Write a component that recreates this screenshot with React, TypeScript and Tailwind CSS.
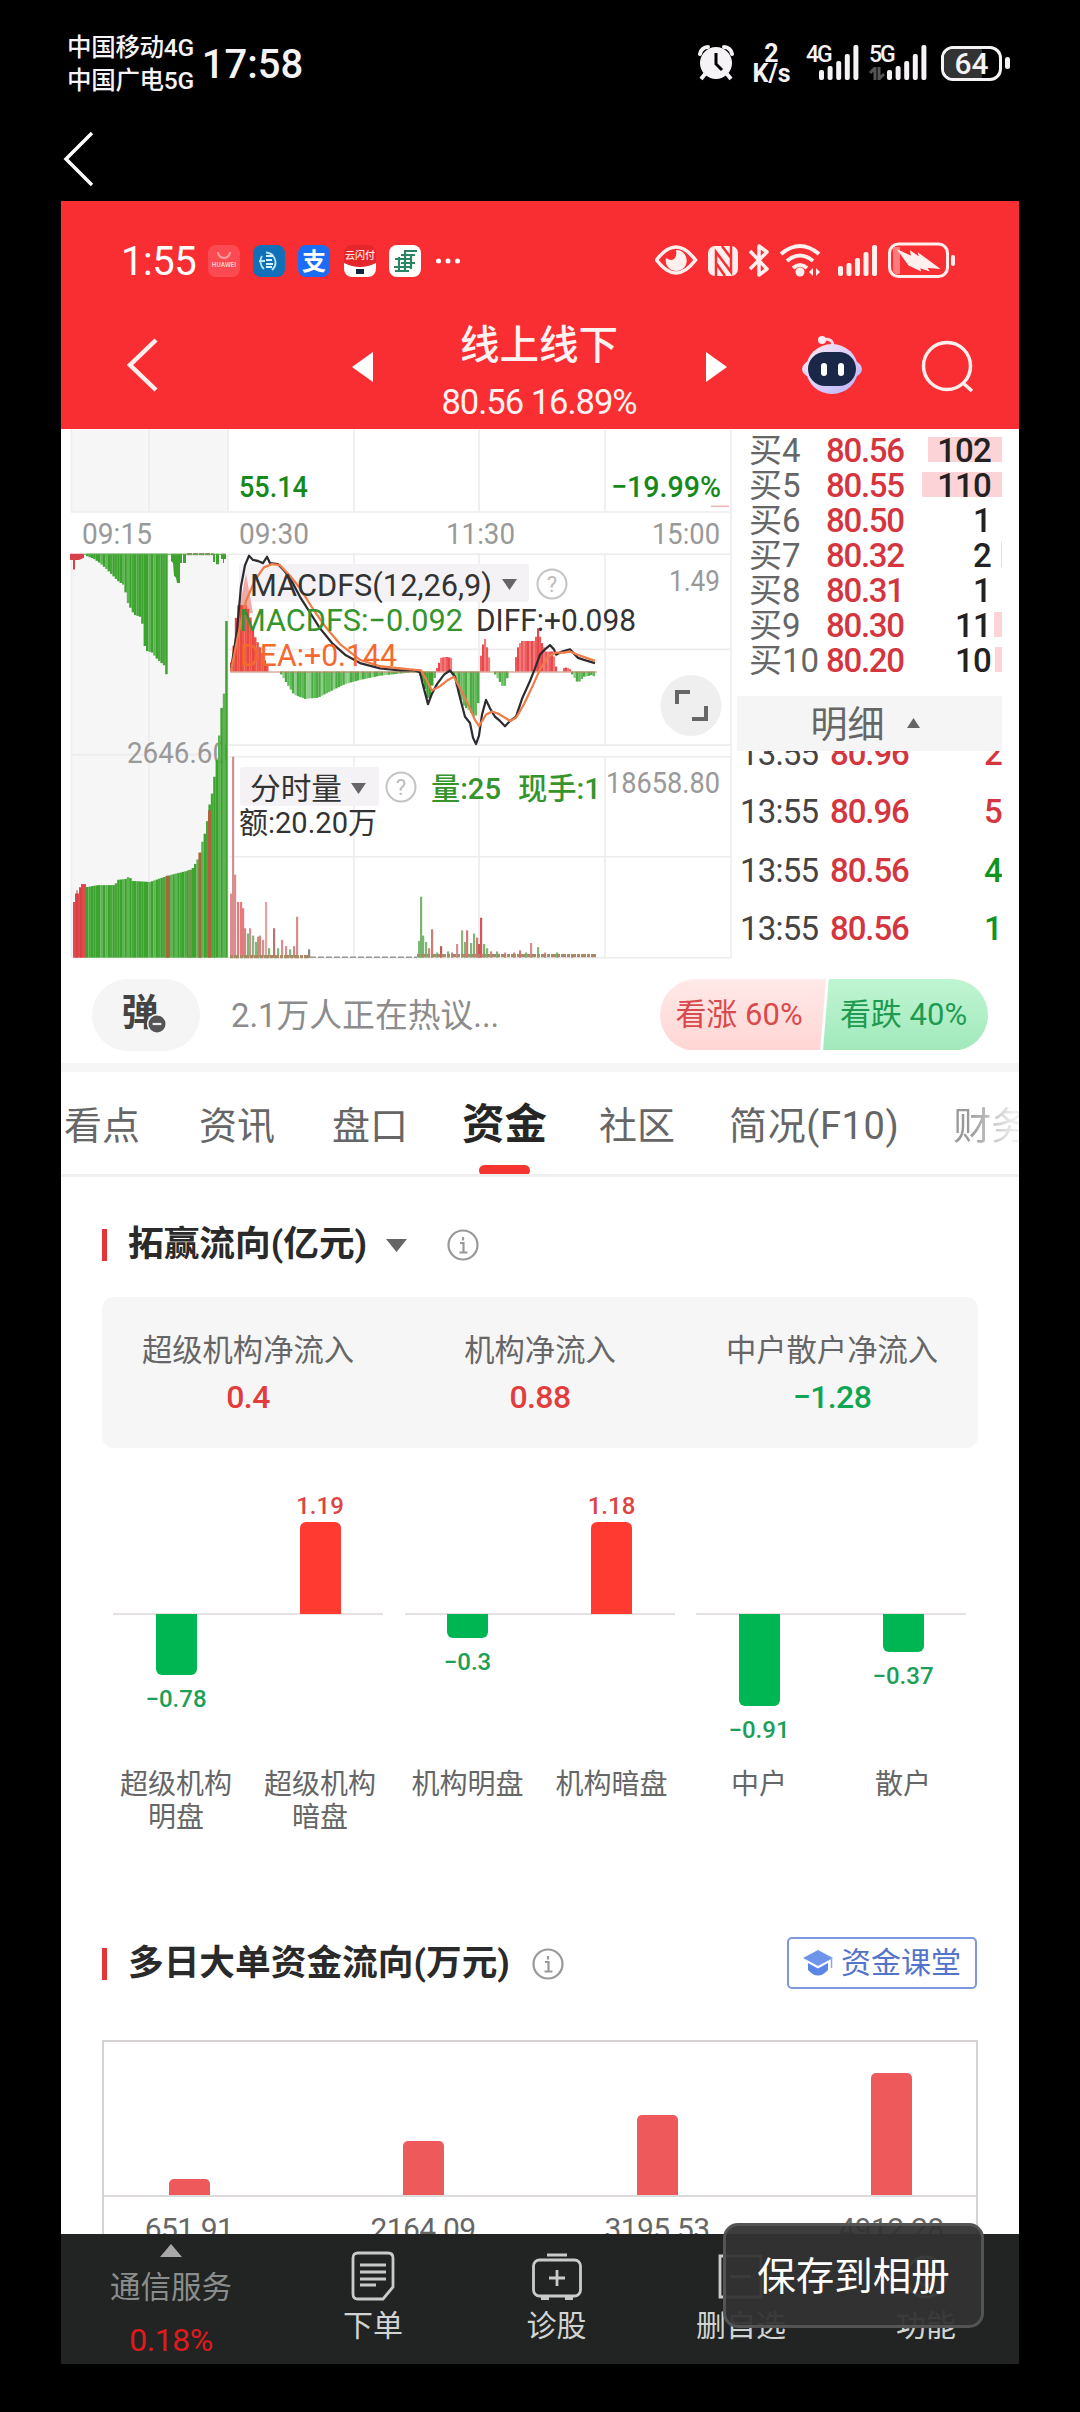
import type { ReactNode } from 'react'

type Point = [number, number]

const RED = '#d8404a'
const GREEN = '#3da32f'

const bids = [
  { level: 4, price: '80.56', volume: 102, bar: 74 },
  { level: 5, price: '80.55', volume: 110, bar: 80 },
  { level: 6, price: '80.50', volume: 1, bar: 0 },
  { level: 7, price: '80.32', volume: 2, bar: 1 },
  { level: 8, price: '80.31', volume: 1, bar: 0 },
  { level: 9, price: '80.30', volume: 11, bar: 8 },
  { level: 10, price: '80.20', volume: 10, bar: 7 },
]

const trades = [
  { time: '13:55', price: '80.96', count: 2, up: true },
  { time: '13:55', price: '80.96', count: 5, up: true },
  { time: '13:55', price: '80.56', count: 4, up: false },
  { time: '13:55', price: '80.56', count: 1, up: false },
]

const summary = [
  { label: '超级机构净流入', value: '0.4', up: true },
  { label: '机构净流入', value: '0.88', up: true },
  { label: '中户散户净流入', value: '−1.28', up: false },
]

const flows = [
  [
    { name: '超级机构明盘', value: '−0.78', size: 61, up: false },
    { name: '超级机构暗盘', value: '1.19', size: 92, up: true },
  ],
  [
    { name: '机构明盘', value: '−0.3', size: 24, up: false },
    { name: '机构暗盘', value: '1.18', size: 92, up: true },
  ],
  [
    { name: '中户', value: '−0.91', size: 92, up: false },
    { name: '散户', value: '−0.37', size: 38, up: false },
  ],
]

const days = [
  { value: '651.91', size: 16 },
  { value: '2164.09', size: 54 },
  { value: '3195.53', size: 80 },
  { value: '4912.28', size: 122 },
]

// height of a polyline at x
function at(points: Point[], x: number) {
  for (let i = 1; i < points.length; i++) {
    const [x0, y0] = points[i - 1]
    const [x1, y1] = points[i]
    if (x <= x1) return y0 + ((y1 - y0) * (x - x0)) / (x1 - x0 || 1)
  }
  return points[points.length - 1][1]
}

function Bars({ points, base, colors, step = 2.4 }: { points: Point[], base: number, colors: string[], step?: number }) {
  const start = points[0][0]
  const end = points[points.length - 1][0]
  const count = Math.floor((end - start) / step)
  return (
    <>
      {Array.from({ length: count }, (_, i) => {
        const x = start + i * step
        const y = at(points, x + step / 2)
        return (
          <rect key={i} x={x} y={Math.min(y, base)} width={step + 0.1} height={Math.abs(y - base)} fill={colors[(i * 7 + (i >> 2)) % colors.length]} />
        )
      })}
    </>
  )
}

const greens = [GREEN, GREEN, '#47a93a', '#5db552', GREEN]
const softGreens = ['#4cab42', '#62bb5a', '#4cab42', '#8ccf86']
const reds = ['#ee5a5c', '#e9484b', '#f07a7c']

const auctionTop: Point[] = [[86, 549], [94, 552], [100, 556], [108, 563], [118, 573], [124, 577], [128, 594], [134, 605], [140, 607], [144, 618], [145, 639], [152, 641], [157, 647], [165, 654], [166, 661], [168, 664]]
const auctionVolume: Point[] = [[86, 864], [98, 862], [115, 862], [118, 857], [127, 856], [129, 853], [132, 858], [150, 859], [156, 857], [165, 854], [172, 852], [185, 849], [192, 847], [197, 839], [200, 832], [203, 818], [206, 810], [209, 788], [212, 775], [215, 755], [218, 735], [221, 697], [224, 680], [225, 612], [228, 610]]

const diff = '231,657 237,620 241,578 245,558 249,549 253,553 258,554 263,556 267,550 270,556 278,557 284,563 290,570 300,588 310,603 320,618 332,632 345,643 360,651 380,656 400,658 415,658 420,660 423,672 428,690 432,680 437,671 444,662 450,658 455,664 460,684 465,702 470,708 473,722 476,728 479,720 482,700 486,686 490,694 495,702 500,706 505,711 510,706 516,702 522,685 530,668 535,656 540,643 545,638 550,634 554,638 556,643 562,640 570,638 578,646 584,648 595,651'
const dea = '231,658 238,625 246,592 255,572 264,560 272,557 280,558 290,568 300,580 312,598 325,616 340,633 360,648 380,654 410,657 421,658 427,668 432,677 440,673 448,667 454,664 460,675 468,690 475,705 479,711 486,700 492,697 498,699 505,703 510,706 516,703 524,690 532,674 540,657 548,645 556,641 564,641 570,640 580,644 595,649'

const spikes: [number, number, string][] = [
  [233, 740, '#d58f93'], [235, 852, '#e08a8c'], [231, 870, '#e08a8c'], [238, 878, '#e57a7c'], [241, 878, '#e57a7c'], [243, 884, '#e57a7c'],
  [245, 903, '#c98a80'], [248, 908, '#7fb576'], [250, 903, '#d58f93'], [253, 910, '#8bb57a'], [256, 916, '#7fb576'], [258, 911, '#c98a80'],
  [260, 910, '#c98a80'], [263, 914, '#d58f93'], [266, 878, '#e3a3a5'], [269, 922, '#7fb576'], [274, 903, '#b5776d'], [278, 922, '#7fb576'],
  [282, 914, '#d58f93'], [286, 920, '#d58f93'], [290, 923, '#7fb576'], [294, 920, '#c98a80'], [297, 892, '#d58f93'], [309, 923, '#888'],
  [419, 915, '#7fb576'], [421, 873, '#77b56d'], [423, 910, '#77b56d'], [426, 916, '#7fb576'], [429, 922, '#c98a80'], [432, 904, '#d07a78'],
  [437, 926, '#7fb576'], [441, 920, '#c05a58'], [448, 925, '#7fb576'], [452, 926, '#c98a80'], [457, 918, '#d58f93'], [462, 905, '#8bb57a'], [465, 916, '#7fb576'],
  [467, 905, '#d07a78'], [471, 917, '#7fb576'], [474, 908, '#7fb576'], [477, 912, '#d07a78'], [479, 918, '#c05a58'], [481, 893, '#d9545a'],
  [484, 918, '#77b56d'], [487, 922, '#7fb576'], [491, 925, '#c98a80'], [497, 925, '#7fb576'], [505, 926, '#d58f93'], [514, 926, '#c98a80'],
  [520, 924, '#d07a78'], [526, 926, '#7fb576'], [531, 917, '#d58f93'], [538, 921, '#7fb576'], [545, 926, '#d58f93'], [557, 926, '#7fb576'], [572, 928, '#c98a80'],
]

function Label({ x, y, w, size = 30, color = '#999', weight = 400, children }: { x: number, y: number, w: number, size?: number, color?: string, weight?: number, children: string }) {
  return (
    <text x={x} y={y} textLength={w} lengthAdjust="spacingAndGlyphs" fontSize={size} fill={color} fontWeight={weight}>{children}</text>
  )
}

function Help({ cx, cy }: { cx: number, cy: number }) {
  return (
    <g>
      <circle cx={cx} cy={cy} r="14.5" fill="none" stroke="#c4c4c4" strokeWidth="2" />
      <text x={cx} y={cy + 8} textAnchor="middle" fontSize="22" fill="#bbb">?</text>
    </g>
  )
}

function MinuteChart() {
  return (
    <svg width="674" height="534" viewBox="61 429 674 534" className="shrink-0">
      {/* plot, in data coordinates */}
      <g transform="translate(0 -21.97) scale(1 1.0523)">
        <path d="M71 429h157v78H71zM71 547h157v384H71z" fill="#f7f6f7" />
        <path d="M71 507.500H731M228 547.500H731M228 638H731M228 729H731M228 740H731M228 835H731M228 931H731M71 738H228" stroke="#eeebee" strokeWidth="1.500" />
        <path d="M71.500 429V507M71.500 547V931M149 429V507M149 547V931M228 429V507M228 547V931M354 429V507M354 547V729M354 740V931M479 429V507M479 547V729M479 740V931M605 429V507M605 547V729M605 740V931M731 429V931" stroke="#eeeaee" strokeWidth="1.500" />
        <path d="M711 502H729" stroke="#f0b6ba" strokeWidth="1.500" />
      </g>
      <Label x={127} y={763} w={101}>2646.60</Label>
      <rect x="239" y="564" width="290" height="38" rx="3" fill="#f4f2f5" />
      <rect x="240" y="767" width="139" height="39" rx="3" fill="#f4f2f5" />
      <g transform="translate(0 -21.97) scale(1 1.0523)">
        <path d="M70 547h14v4l-5 2-4 0v9h-2v-9h-3z" fill={RED} />
        <Bars points={auctionTop} base={547} colors={greens} />
        <path d="M171 547h11v9h-2v19h-3l-1-5-2-2-1-12-2-2zM183 547h3v9h-3zM213 547h2v8h-2zM216 547h3v10h-3zM221 547h5v5h-2v4h-1v-4h-2z" fill={GREEN} />
        <path d="M187 547.500H213" stroke="#9c8a6a" strokeWidth="2" strokeDasharray="5 1" />
        <path d="M84 547.500H226" stroke="#5da850" strokeWidth="1" />
        <path d="M73 931v-53h2v-8h4v-6h2v-3h5v70z" fill="#e3484d" />
        <path d="M77 931v-64M81 931v-66" stroke="#c33a3e" />
        <Bars points={auctionVolume} base={931} colors={greens} />
        <path d="M167.500 931v-78M200 931v-100" stroke="#a8663b" strokeWidth="3" />
        <path d="M190 931v-83" stroke="#6a9a4a" strokeWidth="4" />
        <path d="M209.500 931v-140" stroke="#b0623b" strokeWidth="3" />

        <path d="M239 600L246 566L253 604z" fill="#f3a9a7" />
        <Bars points={[[230, 658], [234, 632], [237, 596], [247, 596], [250, 606], [255, 626], [262, 640], [266, 652], [269, 656]]} base={659} colors={['#ee5146', '#ee5146', '#ea463f']} />
        <Bars points={[[280, 660], [286, 669], [294, 681], [305, 685], [318, 684], [330, 678], [345, 671], [360, 667], [380, 663], [410, 660], [419, 660]]} base={659} colors={softGreens} />
        <Bars points={[[419, 660], [424, 672], [429, 690], [431, 676], [436, 661]]} base={659} colors={greens} />
        <Bars points={[[453, 661], [457, 675], [464, 692], [470, 697], [475, 704], [478, 692], [480, 663]]} base={659} colors={softGreens} />
        <Bars points={[[494, 660], [500, 669], [504, 675], [509, 660]]} base={659} colors={softGreens} />
        <Bars points={[[571, 660], [578, 670], [584, 664], [590, 663], [592, 662], [597, 666]]} base={659} colors={softGreens} />
        <Bars points={[[436, 658], [441, 646], [446, 645], [451, 646], [453, 658]]} base={659} colors={reds} step={2} />
        <Bars points={[[480, 652], [482, 636], [485, 628], [488, 640], [491, 657]]} base={659} colors={reds} step={2} />
        <Bars points={[[515, 650], [518, 636], [521, 630], [535, 630], [538, 618], [541, 630], [546, 640], [553, 640], [557, 659]]} base={659} colors={reds} step={2} />
        <Bars points={[[563, 656], [567, 655], [572, 658]]} base={659} colors={reds} step={2} />
        <path d="M230 659.500H597" stroke="#c9806a" strokeWidth="1" />
        <polyline points={diff} fill="none" stroke="#2c2c30" strokeWidth="2.200" strokeLinejoin="round" />
        <polyline points={dea} fill="none" stroke="#ee7d4a" strokeWidth="2.200" strokeLinejoin="round" />

        {spikes.map(([x, y, color]) => (
          <rect key={x} x={x - 1} y={y} width="2.200" height={931 - y} fill={color} />
        ))}
        <path d="M230 930H310M417 929H597" stroke="#a98a66" strokeWidth="3" strokeDasharray="3 1 5 1" />
        <path d="M310 930.500H417" stroke="#999" strokeWidth="1.500" strokeDasharray="6 2" />
      </g>

      <Label x={239} y={497} w={69} color="#15891b" weight={500}>55.14</Label>
      <Label x={611} y={497} w={110} color="#15891b" weight={500}>−19.99%</Label>
      <Label x={82} y={544} w={70}>09:15</Label>
      <Label x={239} y={544} w={70}>09:30</Label>
      <Label x={446} y={544} w={69}>11:30</Label>
      <Label x={652} y={544} w={68}>15:00</Label>
      <Label x={669} y={591} w={51}>1.49</Label>
      <Label x={250} y={596} w={242} size={31} color="#333">MACDFS(12,26,9)</Label>
      <path d="M502 579h15l-7.500 11z" fill="#666" />
      <Help cx={552} cy={584} />
      <Label x={239} y={631} w={224} size={31} color="#36942c">MACDFS:−0.092</Label>
      <Label x={476} y={631} w={160} size={31} color="#333">DIFF:+0.098</Label>
      <Label x={240} y={666} w={157} size={31} color="#f4692d">DEA:+0.144</Label>

      <circle cx="691" cy="705.500" r="30.500" fill="#efefef" />
      <path d="M677 704V692H690M706 706V719H692" fill="none" stroke="#666" strokeWidth="4" />

      <Label x={250} y={799} w={92} color="#333">分时量</Label>
      <path d="M351 783h15l-7.500 11z" fill="#666" />
      <Help cx={401} cy={787} />
      <Label x={431} y={799} w={70} color="#36942c" weight={500}>量:25</Label>
      <Label x={518} y={799} w={83} color="#36942c" weight={500}>现手:1</Label>
      <Label x={606} y={793} w={114}>18658.80</Label>
      <Label x={239} y={833} w={138} color="#333">额:20.20万</Label>
    </svg>
  )
}

function OrderBook() {
  return (
    <div className="w-[267px] shrink-0 pl-0.5 pt-[4px]">
      <div className="h-[263px]">
        {bids.map((b) => (
          <div key={b.level} className="flex h-[35px] items-center text-[33px] leading-none">
            <span className="w-[77px] shrink-0 whitespace-nowrap pl-[12px] text-[#666]">买{b.level}</span>
            <span className="w-[92px] pl-[12px] font-medium tracking-[-1.3px] text-[#d4353f]">{b.price}</span>
            <span className="relative flex h-full flex-1 items-center justify-end pr-[11px] text-[#222]">
              <i className="absolute right-0 top-[4px] h-[25px] bg-[#fcd3d6]" style={{ width: b.bar }} />
              <span className="relative font-medium tracking-[-0.8px]">{b.volume}</span>
            </span>
          </div>
        ))}
      </div>
      <div className="flex h-[55px] items-center justify-center gap-[22px] bg-[#f5f5f5] pr-[9px] pt-[3px] text-[37px] leading-none text-[#666]">
        明细
        <svg width="13" height="10" viewBox="0 0 13 10" className="mb-1"><path d="M6.500 0L13 10H0z" fill="#666" /></svg>
      </div>
      <div className="flex h-[212px] flex-col justify-end overflow-hidden pb-[5px]">
        {trades.map((t, i) => (
          <div key={i} className="flex h-[58.5px] shrink-0 items-center pl-[3px] text-[33px] leading-none tracking-[-0.8px]">
            <span className="w-[90px] text-[#444]">{t.time}</span>
            <span className="font-medium tracking-[-1.1px] text-[#d4353f]">{t.price}</span>
            <span className={t.up ? 'ml-auto font-medium text-[#d4353f]' : 'ml-auto font-medium text-[#129420]'}>{t.count}</span>
          </div>
        ))}
      </div>
    </div>
  )
}

function Signal({ className }: { className?: string }) {
  return (
    <svg width="40" height="36" viewBox="0 0 40 36" className={className} fill="currentColor">
      <rect x="0" y="25" width="5" height="10" rx="2" />
      <rect x="8.600" y="21" width="5" height="14" rx="2" />
      <rect x="17.200" y="16" width="5" height="19" rx="2" />
      <rect x="25.800" y="9" width="5" height="26" rx="2" />
      <rect x="34.400" y="0" width="5" height="35" rx="2" />
    </svg>
  )
}

function StatusBar() {
  return (
    <div className="flex h-[126px] items-center pl-[67px] pr-[70px] text-[#f5f3f6]">
      <div className="pt-px text-[24.5px] font-medium leading-[33px] tracking-[-0.3px]">
        <div>中国移动4G</div>
        <div>中国广电5G</div>
      </div>
      <div className="ml-[8px] pt-[3px] text-[40px] font-medium leading-none">17:58</div>
      <svg width="36" height="36" viewBox="0 0 36 36" className="ml-auto">
        <circle cx="18" cy="18" r="16" fill="currentColor" />
        <path d="M2 9A8 8 0 0 1 10 2M26 2A8 8 0 0 1 34 9" fill="none" stroke="currentColor" strokeWidth="4" strokeLinecap="round" />
        <path d="M7 29L3 34M29 29L33 34" stroke="currentColor" strokeWidth="4" />
        <path d="M18 8V19L24 25" fill="none" stroke="#000" strokeWidth="3" />
      </svg>
      <div className="ml-[17px] w-[41px] pt-[2px] text-center text-[25px] font-bold leading-[20px]">
        <div>2</div>
        <div>K/s</div>
      </div>
      <div className="relative ml-[27px]">
        <Signal />
        <span className="absolute -left-[13px] -top-[2px] text-[23px] font-medium leading-none tracking-[-2px]">4G</span>
      </div>
      <div className="relative ml-[28px]">
        <Signal />
        <span className="absolute -left-[18px] -top-[2px] text-[23px] font-medium leading-none tracking-[-2px]">5G</span>
        <svg width="16" height="13" viewBox="0 0 16 13" className="absolute -left-[18px] top-[22px]">
          <path d="M6 0V13M10 0V13M6 1L1 6M10 12L15 7" stroke="#555" strokeWidth="3" />
        </svg>
      </div>
      <div className="ml-[14px] flex items-center gap-[3px]">
        <div className="relative flex h-[35px] w-[61px] items-center justify-center overflow-hidden rounded-[12px] border-[3px] border-current">
          <i className="absolute inset-y-0 left-0 w-[38px] bg-[#333]" />
          <span className="relative pt-px text-[30px] font-medium leading-none">64</span>
        </div>
        <i className="h-[12px] w-[5px] rounded-full bg-current" />
      </div>
    </div>
  )
}

function AppIcons() {
  return (
    <svg width="256" height="36" viewBox="0 0 256 36" className="ml-[10px]">
      <rect x="2" y="2" width="32" height="32" rx="8" fill="#fb4a52" />
      <path d="M12 9a6 6 0 0 0 12 0" fill="none" stroke="#ffa0a3" strokeWidth="2" />
      <text x="18" y="24" textAnchor="middle" fontSize="6.500" fontWeight="700" fill="#ffc3c5">HUAWEI</text>
      <rect x="47" y="2" width="32" height="32" rx="8" fill="#1170b8" />
      <path d="M58 26A10 10 0 0 1 56 13M60 9.500A10 10 0 0 1 66 27M53 18h6" fill="none" stroke="#b9e6f5" strokeWidth="1.800" />
      <path d="M60 13h7M60 17h6M60 21h7M60 24h6" stroke="#d8f2fa" strokeWidth="2" />
      <rect x="92" y="2" width="32" height="32" rx="8" fill="#1c6df5" />
      <text x="108" y="27" textAnchor="middle" fontSize="24" fontWeight="700" fill="#fff">支</text>
      <rect x="138" y="2" width="32" height="32" rx="8" fill="#e5262b" />
      <path d="M138 20q16 8 32 0v6a8 8 0 0 1-8 8h-16a8 8 0 0 1-8-8z" fill="#fff" />
      <text x="154" y="16" textAnchor="middle" fontSize="10" fontWeight="500" fill="#ffe3e0">云闪付</text>
      <rect x="150" y="26" width="8" height="5" fill="#16243c" />
      <rect x="183" y="2" width="32" height="32" rx="8" fill="#fff" />
      <path d="M199 8h12M195 12h14M189 16h17M195 20h14M188 24h18M189 28h14M199 7v20M193 14v14M205 12v14" stroke="#2b8462" strokeWidth="2.200" />
      <g fill="#fff">
        <circle cx="232.500" cy="18" r="2.500" />
        <circle cx="242" cy="18" r="2.500" />
        <circle cx="251.500" cy="18" r="2.500" />
      </g>
    </svg>
  )
}

function DeviceIcons() {
  return (
    <svg width="302" height="38" viewBox="655 242 302 38" className="ml-auto text-[#fff0ee]" fill="none" stroke="currentColor">
      <path d="M656.500 260Q676 234 695.500 260Q676 286 656.500 260z" strokeWidth="3.500" />
      <path d="M676 250a10.500 10.500 0 1 1-10 8q6 4 9 0q2-3 1-8z" fill="currentColor" stroke="none" />
      <rect x="708" y="246" width="30" height="30" rx="7" fill="currentColor" stroke="none" />
      <path d="M716 276V252L731 272V246M722 246L731 258M716 263L725 276" stroke="#f92e33" strokeWidth="2.500" />
      <path d="M750 251L767 269L759 275V246L767 252L750 269" strokeWidth="3.500" strokeLinejoin="round" />
      <path d="M781 254Q800 238 819 254M787 261Q800 250 813 261M793 268Q800 262 807 268" strokeWidth="4" />
      <circle cx="800" cy="272" r="4.500" fill="currentColor" stroke="none" />
      <path d="M813 268l-4 4 4 4zM816 268l4 4-4 4z" fill="currentColor" stroke="none" />
      <g fill="currentColor" stroke="none">
        <rect x="838" y="266" width="5" height="10" rx="2" />
        <rect x="846.500" y="263" width="5" height="13" rx="2" />
        <rect x="855" y="258" width="5" height="18" rx="2" />
        <rect x="863.500" y="252" width="5" height="24" rx="2" />
        <rect x="872" y="245" width="5" height="31" rx="2" />
      </g>
      <rect x="889.500" y="244" width="58" height="32.500" rx="9" strokeWidth="3" />
      <path d="M893 247h7v27h-4q-3-1-3-5z" fill="#ff7a7d" stroke="none" />
      <path d="M899 251l13 6-1-5 9 6-1-4 19 14-12-1 2 3-9-3 1 3-11-5z" fill="currentColor" stroke="currentColor" strokeWidth="1.500" />
      <rect x="951" y="255" width="4" height="11" rx="2" fill="currentColor" stroke="none" />
    </svg>
  )
}

function Header() {
  return (
    <div className="h-[228px] shrink-0 bg-[#f92e33] pt-[40px] text-white">
      <div className="flex h-[40px] items-center pl-[60px] pr-[62px]">
        <span className="pt-[2px] text-[40px] leading-none tracking-[-0.5px]">1:55</span>
        <AppIcons />
        <DeviceIcons />
      </div>
      <div className="flex h-[148px] items-center pl-[64px] pr-[45px] pt-[24px]">
        <svg width="34" height="56" viewBox="0 0 34 56" className="mb-[4px]"><path d="M31 3L5 28L31 53" fill="none" stroke="#fff0ee" strokeWidth="4.500" /></svg>
        <svg width="21" height="30" viewBox="0 0 21 30" className="ml-[193px]"><path d="M0 15L21 0V30z" fill="#fff" /></svg>
        <div className="ml-[33px] flex w-[266px] flex-col items-center pt-[13px]">
          <div className="text-[39.5px] font-medium leading-[56px] text-[#fff3f1]">线上线下</div>
          <div className="whitespace-nowrap text-[34.5px] leading-[56px] tracking-[-1px] text-[#fff3f1]">80.56 16.89%</div>
        </div>
        <svg width="21" height="30" viewBox="0 0 21 30" className="ml-[34px]"><path d="M21 15L0 0V30z" fill="#fff" /></svg>
        <svg width="62" height="60" viewBox="0 0 62 60" className="ml-[74px] mb-[4px]">
          <defs>
            <linearGradient id="shell" x1="0" y1="0" x2="1" y2="1">
              <stop offset="0" stopColor="#ffe9f3" />
              <stop offset="1" stopColor="#b9b4ff" />
            </linearGradient>
          </defs>
          <path d="M21 5q11-3 11 7" fill="none" stroke="#ffd9e6" strokeWidth="3" />
          <circle cx="21" cy="5" r="4" fill="#ffe9f3" />
          <ellipse cx="31" cy="34" rx="30" ry="13" fill="url(#shell)" />
          <ellipse cx="31" cy="34" rx="26" ry="25" fill="url(#shell)" />
          <rect x="7" y="17" width="48" height="34" rx="17" fill="#1b2748" />
          <rect x="20" y="28" width="6" height="13" rx="3" fill="#fff" />
          <rect x="37" y="28" width="6" height="13" rx="3" fill="#fff" />
        </svg>
        <svg width="54" height="54" viewBox="0 0 54 54" className="ml-auto" fill="none" stroke="#fff0ee" strokeWidth="3.500">
          <circle cx="27" cy="26" r="23.500" />
          <path d="M43 43L52 51" />
        </svg>
      </div>
    </div>
  )
}

function DiscussBar() {
  return (
    <div className="box-content flex h-[91px] items-center border-b-[9px] border-[#f6f6f6] pb-px pl-[31px] pr-[31px] pt-[8px]">
      <div className="relative -mt-[3px] flex h-[72px] w-[108px] items-center justify-center rounded-full bg-[#f5f5f5] pb-1 pr-3 text-[37px] font-bold leading-none text-[#444]">
        弹
        <svg width="22" height="22" viewBox="0 0 20 20" className="absolute left-[54px] top-[34px]">
          <circle cx="10" cy="10" r="8.500" fill="#555" stroke="#f5f5f5" strokeWidth="1.500" />
          <path d="M6 10h8" stroke="#eee" strokeWidth="2" />
        </svg>
      </div>
      <span className="ml-[31px] text-[32.8px] leading-none text-[#8c8c8c]">2.1万人正在热议...</span>
      <div className="-mt-[3px] ml-auto flex h-[72px] overflow-hidden rounded-full pb-px text-[31px] leading-none">
        <div className="flex w-[166px] items-center justify-center bg-linear-to-b from-[#ffe9e8] to-[#ffd6d4] pr-2 text-[#d84a4c] [clip-path:polygon(0_0,100%_0,96.500%_100%,0_100%)]">看涨 60%</div>
        <div className="-ml-[3px] flex w-[165px] items-center justify-center bg-linear-to-b from-[#bff5d2] to-[#a2e9bc] pr-1 text-[#1f9b51] [clip-path:polygon(3.500%_0,100%_0,100%_100%,0_100%)]">看跌 40%</div>
      </div>
    </div>
  )
}

function Tabs() {
  return (
    <div className="relative flex h-[105px] items-center overflow-hidden whitespace-nowrap border-b-[3px] border-[#efefef] pl-[3px] pt-[5px] text-[38px] leading-none text-[#666]">
      <span>看点</span>
      <span className="ml-[59px]">资讯</span>
      <span className="ml-[57px]">盘口</span>
      <span className="relative ml-[54px] text-[42.5px] font-bold text-[#262626]">
        资金
        <i className="absolute -bottom-[29px] left-[17px] h-[11px] w-[51px] rounded-full bg-[#f5352f]" />
      </span>
      <span className="ml-[52px]">社区</span>
      <span className="ml-[54px] tracking-[0.6px]">简况(F10)</span>
      <span className="ml-[54px] bg-linear-to-r from-[#999] from-20% to-[#eee] to-80% bg-clip-text text-transparent">财务</span>
    </div>
  )
}

function SectionTitle({ children }: { children: ReactNode }) {
  return (
    <>
      <i className="h-[32px] w-[5px] bg-[#e3343a]" />
      <h2 className="ml-[21px] whitespace-nowrap text-[35.7px] font-bold leading-none text-[#2a2a2a]">{children}</h2>
    </>
  )
}

function Info({ className }: { className?: string }) {
  return (
    <svg width="32" height="32" viewBox="0 0 32 32" className={className} fill="none" stroke="#999" strokeWidth="2.200">
      <circle cx="16" cy="16" r="14.500" />
      <path d="M13 14h3.500v9M12.500 23.500h8M16 8v3.500" />
    </svg>
  )
}

function FlowBar({ value, size, up }: { value: string, size: number, up: boolean }) {
  return (
    <div className="flex w-[126px] flex-col items-center text-[24px] font-medium leading-none">
      <div className="flex h-[132px] flex-col items-center justify-end">
        {up && <span className="mb-[4px] text-[#dd4444]">{value}</span>}
        {up && <i className="w-[41px] rounded-t-[6px] bg-[#ff3b31]" style={{ height: size }} />}
      </div>
      {!up && <i className="w-[41px] rounded-b-[6px] bg-[#00b653]" style={{ height: size }} />}
      {!up && <span className="mt-[12px] text-[#1c9f56]">{value}</span>}
    </div>
  )
}

function CapitalFlow() {
  return (
    <section className="h-[723px] px-[41px]">
      <div className="flex h-[136px] items-center">
        <SectionTitle>拓赢流向(亿元)</SectionTitle>
        <svg width="21" height="13" viewBox="0 0 21 13" className="ml-[19px]"><path d="M0 0H21L10.500 13z" fill="#666" /></svg>
        <Info className="ml-[40px]" />
      </div>
      <div className="mt-[-16px] grid h-[151px] grid-cols-3 rounded-[12px] bg-[#f6f6f6] pt-[35px] text-center">
        {summary.map((s) => (
          <div key={s.label}>
            <div className="text-[30.3px] leading-[38px] text-[#666]">{s.label}</div>
            <div className={s.up ? 'mt-[8px] text-[32px] font-medium leading-[38px] tracking-[-0.6px] text-[#e23c3c]' : 'mt-[8px] text-[32px] font-medium leading-[38px] tracking-[-0.6px] text-[#0fa653]'}>{s.value}</div>
          </div>
        ))}
      </div>
      <div className="mt-[34px] flex justify-between pl-[11px] pr-[12px]">
        {flows.map((group, i) => (
          <div key={i} className="w-[270px]">
            <div className="flex h-[286px] justify-between bg-[linear-gradient(#e6e2e4,#e6e2e4)] bg-[length:100%_2px] bg-[position:0_131px] bg-no-repeat">
              {group.map((f) => <FlowBar key={f.name} value={f.value} size={f.size} up={f.up} />)}
            </div>
            <div className="flex justify-between text-[28px] leading-[33px] text-[#666]">
              {group.map((f) => (
                <div key={f.name} className="flex w-[126px] justify-center">
                  <span className="w-[112px] text-center">{f.name}</span>
                </div>
              ))}
            </div>
          </div>
        ))}
      </div>
    </section>
  )
}

function DailyFlow() {
  return (
    <section className="min-h-0 flex-1 overflow-hidden px-[41px]">
      <div className="flex h-[131px] items-center pb-1">
        <SectionTitle>多日大单资金流向(万元)</SectionTitle>
        <Info className="ml-[22px]" />
        <div className="-mt-px ml-auto mr-px flex h-[52px] w-[190px] items-center justify-center gap-[8px] rounded-[5px] border-2 border-[#7d98dd] text-[30px] leading-none text-[#5474c9]">
          <svg width="30" height="28" viewBox="0 0 30 28">
            <path d="M15 1L30 9L15 17L0 9z" fill="#6f95ea" />
            <path d="M5 14L15 19.500L25 14V21Q15 32 5 21z" fill="#5b85e6" />
            <path d="M28.500 9V19" stroke="#8aa8ee" strokeWidth="1.500" />
          </svg>
          资金课堂
        </div>
      </div>
      <div className="mt-[9px] h-[240px] overflow-hidden border-2 border-[#d6d2d4]">
        <div className="-ml-[32px] flex w-[938px]">
          {days.map((d) => (
            <div key={d.value} className="w-[234px] text-center">
              <div className="flex h-[155px] items-end justify-center border-b-2 border-[#dedadc]">
                <i className="w-[41px] rounded-t-[5px] bg-[#ee5a5b]" style={{ height: d.size }} />
              </div>
              <div className="mt-[14px] text-[30px] leading-[36px] tracking-[-0.6px] text-[#666]">{d.value}</div>
            </div>
          ))}
        </div>
      </div>
    </section>
  )
}

function NavItem({ label, className, children }: { label: string, className: string, children: ReactNode }) {
  return (
    <div className={`flex shrink-0 flex-col items-center pt-[17px] ${className}`}>
      <svg width="52" height="50" viewBox="0 0 52 50" fill="none" stroke="#c9cbca" strokeWidth="2.800">{children}</svg>
      <span className="mt-[8px] whitespace-nowrap text-[30px] leading-[34px] text-[#d2d4d3]">{label}</span>
    </div>
  )
}

function BottomNav() {
  return (
    <nav className="flex h-[130px] shrink-0 bg-[#212422]">
      <div className="flex w-[220px] flex-col items-center pt-[10px]">
        <svg width="22" height="13" viewBox="0 0 22 13"><path d="M11 0L22 13H0z" fill="#a8a8a8" /></svg>
        <span className="mt-[13px] text-[30.5px] leading-[36px] text-[#8b8d8c]">通信服务</span>
        <span className="mt-[16px] text-[32px] leading-[36px] tracking-[-0.5px] text-[#e01a1c]">0.18%</span>
      </div>
      <NavItem label="下单" className="w-[184px]">
        <path d="M11 2H41Q46 2 46 7V36L36 48H11Q6 48 6 43V7Q6 2 11 2zM13 14H39M13 21H39M13 28H39M13 34H29" />
      </NavItem>
      <NavItem label="诊股" className="w-[183px]">
        <rect x="2.500" y="9" width="47" height="36" rx="6" />
        <path d="M16 4H36M26 19V35M18 27H34M10 47.500H18M34 47.500H42" />
      </NavItem>
      <NavItem label="删自选" className="w-[186px]">
        <path d="M5 5H46V46H5zM15 25.500H36" />
      </NavItem>
      <NavItem label="功能" className="w-[184px]">
        <circle cx="26" cy="26" r="20" />
        <circle cx="26" cy="26" r="8" />
      </NavItem>
    </nav>
  )
}

export default function App() {
  return (
    <div className="relative flex h-[2412px] w-[1080px] flex-col overflow-hidden bg-black font-[Roboto,'Noto_Sans_CJK_SC',sans-serif]">
      <StatusBar />
      <div className="h-[75px] shrink-0 pl-[62px] pt-[5px]">
        <svg width="34" height="56" viewBox="0 0 34 56"><path d="M30 2L4 28L30 54" fill="none" stroke="#fff" strokeWidth="3.500" /></svg>
      </div>
      <div className="ml-[61px] flex h-[2163px] w-[958px] flex-col overflow-hidden bg-white">
        <Header />
        <div className="flex h-[534px] shrink-0">
          <MinuteChart />
          <OrderBook />
        </div>
        <div className="shrink-0">
          <DiscussBar />
          <Tabs />
          <CapitalFlow />
        </div>
        <DailyFlow />
        <BottomNav />
      </div>
      <button className="absolute left-[723px] top-[2223px] flex h-[105px] w-[261px] items-center justify-center rounded-[15px] border-[3px] border-[#545454] bg-[#333333f2] pt-[3px] text-[38.500px] leading-none text-white">
        保存到相册
      </button>
    </div>
  )
}
